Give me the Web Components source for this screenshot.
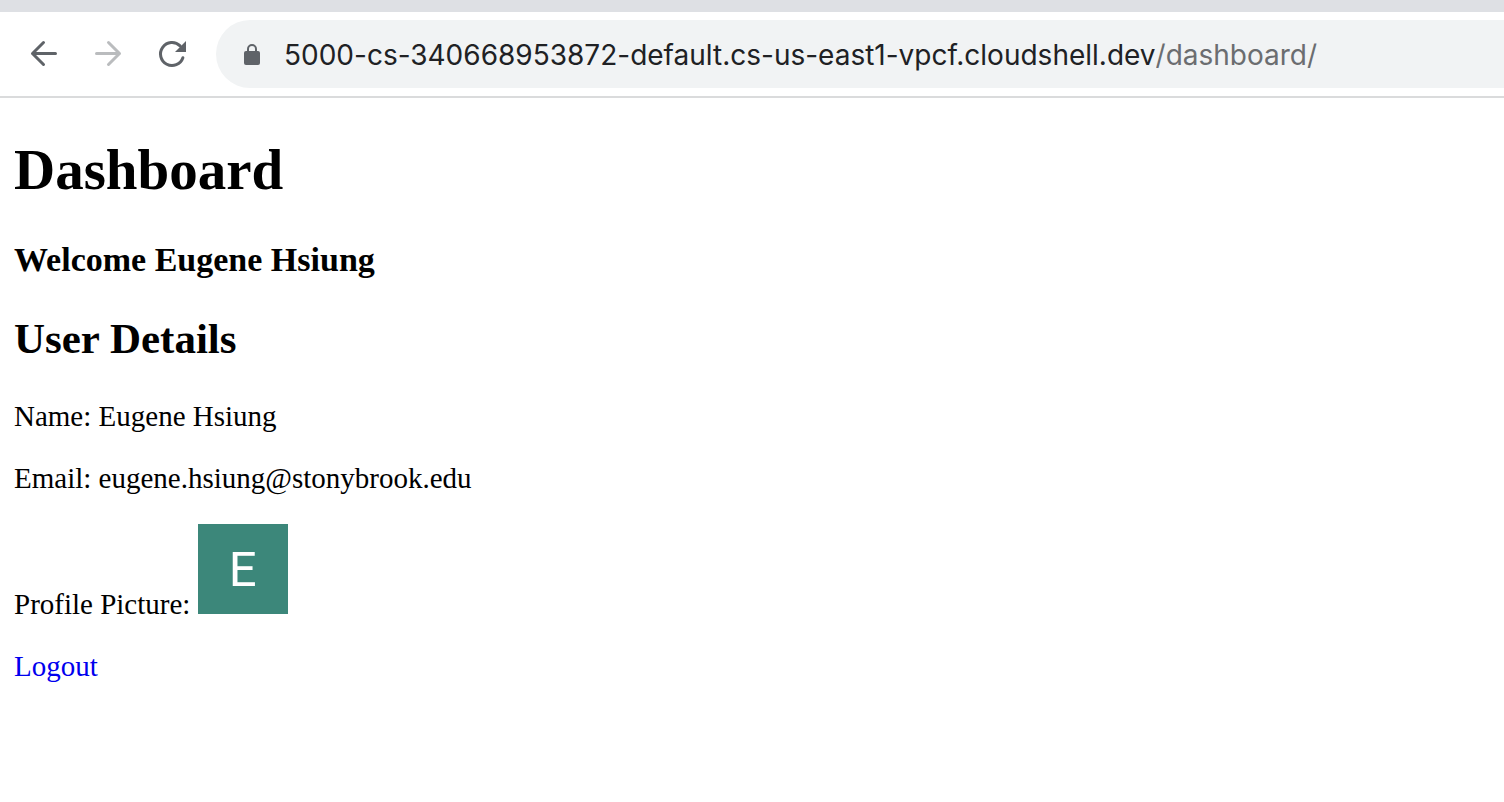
<!DOCTYPE html>
<html lang="en">
<head>
<meta charset="utf-8">
<title>Dashboard</title>
<style>
  body { margin: 0; background: #fff; color: #000; font-family: "Liberation Serif", "Times New Roman", serif; }
</style>
</head>
<body>
<browser-toolbar host="5000-cs-340668953872-default.cs-us-east1-vpcf.cloudshell.dev" path="/dashboard/"></browser-toolbar>
<user-dashboard>
  <span slot="welcome">Welcome Eugene Hsiung</span>
  <detail-row label="Name:">Eugene Hsiung</detail-row>
  <detail-row label="Email:">eugene.hsiung@stonybrook.edu</detail-row>
  <detail-row label="Profile Picture:"><profile-picture>E</profile-picture></detail-row>
</user-dashboard>

<template id="browser-toolbar">
  <style>
    :host { display: block; border-top: 12px solid #dee0e4; border-bottom: 2px solid #dadbdc; background: #fff; }
    .bar { display: flex; align-items: center; padding: 8px 0 8px 12px; overflow: hidden; }
    button { flex: none; width: 64px; height: 64px; padding: 0; border: 0; border-radius: 50%; background: none; color: #5f6368; display: grid; place-items: center; }
    button:disabled { color: #babcbe; }
    svg { display: block; fill: none; stroke: currentColor; }
    .address { flex: 1; min-width: 0; display: flex; align-items: center; height: 68px; margin-left: 12px; padding-left: 28px; border-radius: 34px 0 0 34px; background: #f1f3f4; }
    .lock { flex: none; margin-right: 24px; color: #5f6368; }
    input { min-width: 0; padding: 2px 0 0; border: 0; outline: 0; background: none; font: 28px/36px Inter, sans-serif; color: #202124; }
    .host { field-sizing: content; }
    .path { flex: 1; color: #6b6d70; }
  </style>
  <nav class="bar" aria-label="Browser">
    <button type="button" aria-label="Back"><svg width="32" height="32" viewBox="0 0 32 32" stroke-width="3" stroke-linecap="round" stroke-linejoin="round"><path d="M27.5 15.500H4.500M15.500 4.500L4.500 15.500L15.500 26.500"/></svg></button>
    <button type="button" aria-label="Forward" disabled><svg width="32" height="32" viewBox="0 0 32 32" stroke-width="3" stroke-linecap="round" stroke-linejoin="round"><path d="M4.500 15.500H27.500M16.500 4.500L27.500 15.500L16.500 26.500"/></svg></button>
    <button type="button" aria-label="Reload"><svg width="32" height="32" viewBox="0 0 32 32" stroke-width="3" stroke-linecap="round"><path d="M26.900 19.700A11.500 11.500 0 1 1 24.100 7.900"/><path d="M30 3V14H19Z" fill="currentColor" stroke="none"/></svg></button>
    <div class="address">
      <svg class="lock" width="16" height="22" viewBox="0 0 16 22"><rect y="8" width="16" height="14" rx="2" fill="currentColor" stroke="none"/><path d="M4 9V6a4 4 0 0 1 8 0V9" stroke-width="2"/></svg>
      <input class="host" aria-label="Site address" spellcheck="false">
      <input class="path" aria-label="Page path" spellcheck="false">
    </div>
  </nav>
</template>

<template id="user-dashboard">
  <style>
    :host { display: block; padding: 39px 14px 29px; font-size: 29px; line-height: 33px; }
    h1 { margin: 0 0 37px; font-size: 57px; line-height: 66px; }
    h3 { margin: 0 0 35px; font-size: 34px; line-height: 39px; }
    h2 { margin: 0 0 36px; font-size: 43px; line-height: 50px; }
    .details { display: flex; flex-direction: column; gap: 29px; margin-bottom: 29px; }
    a { color: #0000ee; text-decoration: none; }
  </style>
  <main>
    <h1>Dashboard</h1>
    <h3><slot name="welcome"></slot></h3>
    <h2>User Details</h2>
    <div class="details"><slot></slot></div>
    <a href="/logout">Logout</a>
  </main>
</template>

<template id="detail-row">
  <style>:host { display: block; } p { margin: 0; }</style>
  <p><span class="label"></span> <slot></slot></p>
</template>

<template id="profile-picture">
  <style>
    :host { display: inline-block; width: 90px; height: 90px; overflow: hidden; background: #3c877a; color: #fff; font: 49px/92px Roboto, sans-serif; text-align: center; vertical-align: baseline; }
  </style>
  <slot></slot>
</template>

<script>
  class TemplateElement extends HTMLElement {
    constructor() {
      super();
      this.attachShadow({ mode: "open" }).append(document.getElementById(this.localName).content.cloneNode(true));
    }
  }
  customElements.define("browser-toolbar", class extends TemplateElement {
    connectedCallback() {
      for (const part of ["host", "path"]) this.shadowRoot.querySelector("." + part).value = this.getAttribute(part);
    }
  });
  customElements.define("detail-row", class extends TemplateElement {
    connectedCallback() { this.shadowRoot.querySelector(".label").textContent = this.getAttribute("label"); }
  });
  customElements.define("profile-picture", class extends TemplateElement {});
  customElements.define("user-dashboard", class extends TemplateElement {});
</script>
</body>
</html>
